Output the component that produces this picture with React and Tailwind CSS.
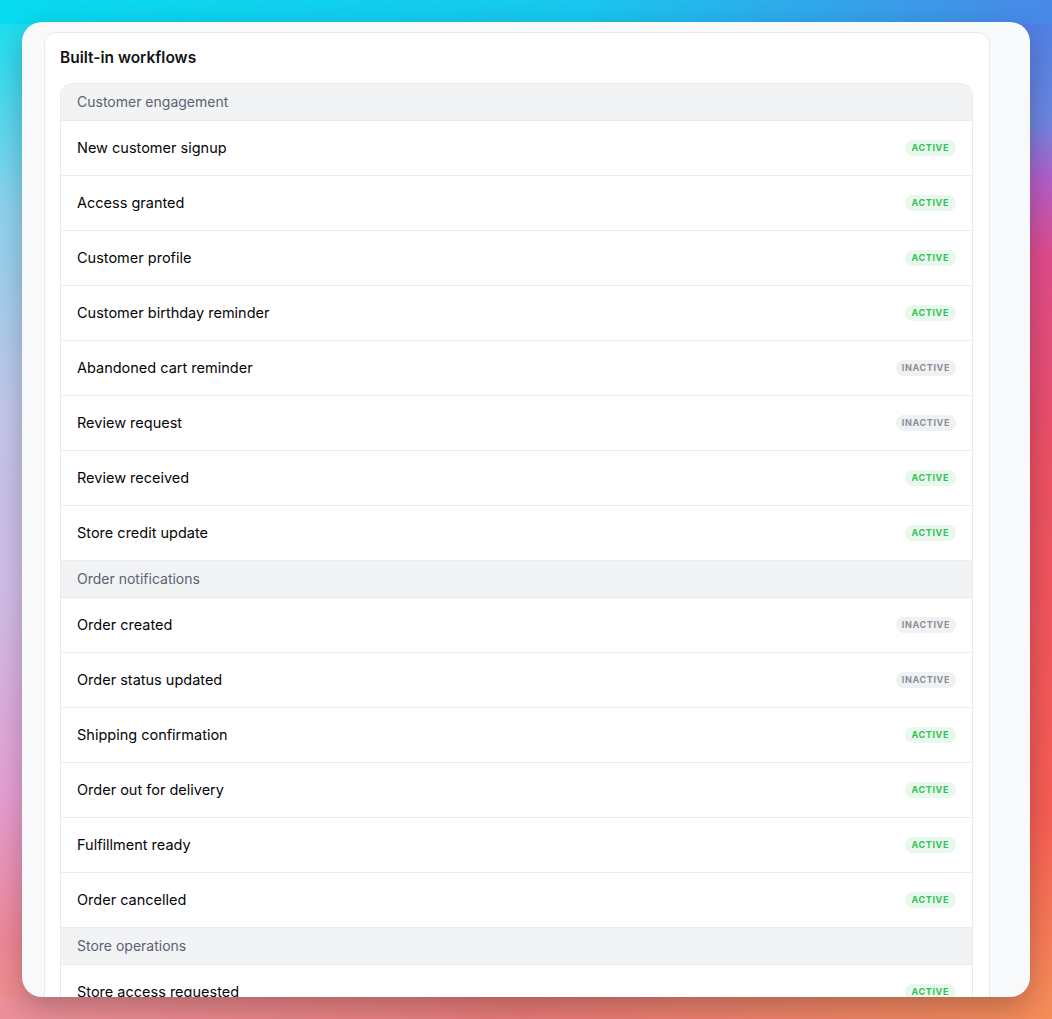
import React from "react"

const groups = [
  {
    title: "Customer engagement",
    rows: [
      ["New customer signup", true],
      ["Access granted", true],
      ["Customer profile", true],
      ["Customer birthday reminder", true],
      ["Abandoned cart reminder", false],
      ["Review request", false],
      ["Review received", true],
      ["Store credit update", true],
    ],
  },
  {
    title: "Order notifications",
    rows: [
      ["Order created", false],
      ["Order status updated", false],
      ["Shipping confirmation", true],
      ["Order out for delivery", true],
      ["Fulfillment ready", true],
      ["Order cancelled", true],
    ],
  },
  {
    title: "Store operations",
    rows: [["Store access requested", true]],
  },
]

const Badge = ({ active }) =>
  active ? (
    <span className="rounded-full bg-[#e8f8ec] px-[7px] h-4 leading-4 text-[9px] font-bold tracking-[0.07em] text-[#34c05a]">
      ACTIVE
    </span>
  ) : (
    <span className="rounded-full bg-[#f0f1f3] px-[6px] h-4 leading-4 text-[9px] font-bold tracking-[0.07em] text-[#8b9099]">
      INACTIVE
    </span>
  )

const App = () => {
  return (
    <div
      className="h-[1019px] w-full overflow-hidden p-[22px] [background:linear-gradient(to_right,#08dcf0,#18c8f0_55%,#4a88e8)_top/100%_24px_no-repeat,linear-gradient(to_right,#ec909a,#e87a78_50%,#f58c58)_bottom/100%_24px_no-repeat,linear-gradient(to_bottom,#10e0f0_0%,#8cd4f0_20%,#c4c8ec_40%,#d4bce8_60%,#e6a0d4_78%,#f0889a_92%,#f09088_100%)_left/50%_100%_no-repeat,linear-gradient(to_bottom,#4a80e8_0%,#6e86e2_12%,#b65ec6_18%,#e04c8c_25%,#ee5064_45%,#f85e54_80%,#f8905a_100%)]"
      style={{ fontFamily: "Inter, 'Noto Sans', sans-serif" }}
    >
      <div className="h-[975px] overflow-hidden rounded-[20px] bg-[#f8f9fb] pt-[10px] pl-[22px] pr-[40px] shadow-[0_10px_30px_rgba(0,0,0,0.25)]">
        <div className="rounded-xl border border-[#e9eaef] bg-white pl-[15px] pr-4 pt-[13px]">
          <h1 className="h-6 leading-6 text-[15.5px] font-semibold text-[#111318]">Built-in workflows</h1>
          <div className="mt-[13px] overflow-hidden rounded-t-xl border border-[#e9eaef]">
            {groups.map((g) => (
              <div key={g.title}>
                <div className="flex h-[37px] items-center border-b border-[#e9eaef] bg-[#f2f3f5] px-4 pb-[2px] text-[14px] text-[#5c6270]">
                  {g.title}
                </div>
                {g.rows.map(([name, active]) => (
                  <div
                    key={name}
                    className="flex h-[55px] items-center justify-between border-b border-[#ebecf0] px-4"
                  >
                    <span className="text-[14.5px] font-normal text-[#050608]">{name}</span>
                    <Badge active={active} />
                  </div>
                ))}
              </div>
            ))}
          </div>
        </div>
      </div>
    </div>
  )
}

export default App
